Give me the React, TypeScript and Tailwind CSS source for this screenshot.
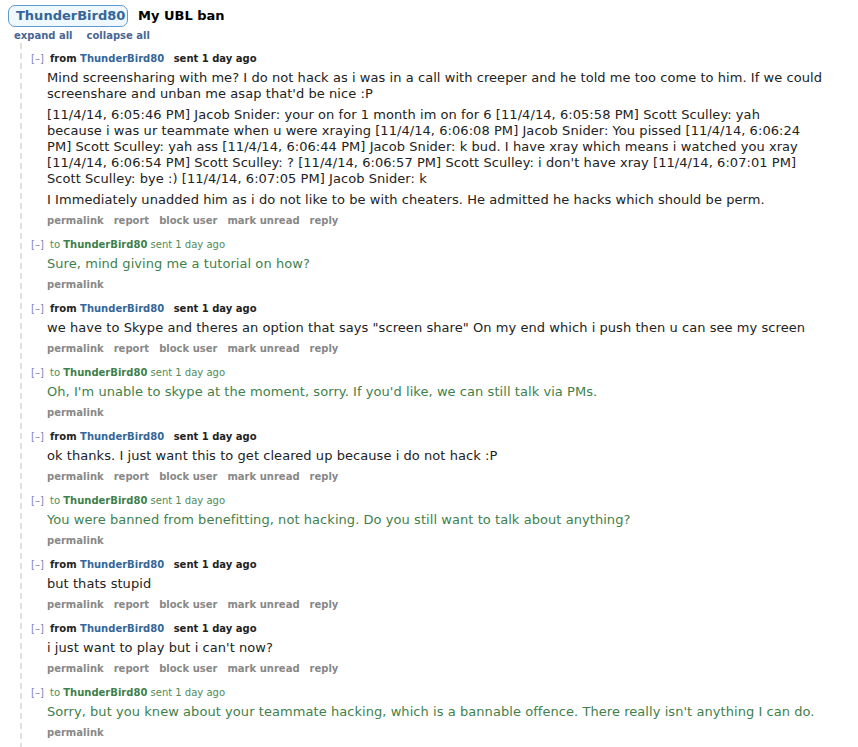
import React from "react";

type Msg = {
  dir: "from" | "to";
  paras: string[][];
};

// each paragraph is a list of lines; lines after the first start on a new row
const messages: Msg[] = [
  {
    dir: "from",
    paras: [
      [
        "Mind screensharing with me? I do not hack as i was in a call with creeper and he told me too come to him. If we could screenshare and unban me asap that'd be nice :P",
      ],
      [
        "[11/4/14, 6:05:46 PM] Jacob Snider: your on for 1 month im on for 6 [11/4/14, 6:05:58 PM] Scott Sculley: yah",
        "because i was ur teammate when u were xraying [11/4/14, 6:06:08 PM] Jacob Snider: You pissed [11/4/14, 6:06:24",
        "PM] Scott Sculley: yah ass [11/4/14, 6:06:44 PM] Jacob Snider: k bud. I have xray which means i watched you xray",
        "[11/4/14, 6:06:54 PM] Scott Sculley: ? [11/4/14, 6:06:57 PM] Scott Sculley: i don't have xray [11/4/14, 6:07:01 PM]",
        "Scott Sculley: bye :) [11/4/14, 6:07:05 PM] Jacob Snider: k",
      ],
      [
        "I Immediately unadded him as i do not like to be with cheaters. He admitted he hacks which should be perm.",
      ],
    ],
  },
  { dir: "to", paras: [["Sure, mind giving me a tutorial on how?"]] },
  {
    dir: "from",
    paras: [
      [
        'we have to Skype and theres an option that says "screen share" On my end which i push then u can see my screen',
      ],
    ],
  },
  {
    dir: "to",
    paras: [
      [
        "Oh, I'm unable to skype at the moment, sorry. If you'd like, we can still talk via PMs.",
      ],
    ],
  },
  {
    dir: "from",
    paras: [
      ["ok thanks. I just want this to get cleared up because i do not hack :P"],
    ],
  },
  {
    dir: "to",
    paras: [
      [
        "You were banned from benefitting, not hacking. Do you still want to talk about anything?",
      ],
    ],
  },
  { dir: "from", paras: [["but thats stupid"]] },
  { dir: "from", paras: [["i just want to play but i can't now?"]] },
  {
    dir: "to",
    paras: [
      [
        "Sorry, but you knew about your teammate hacking, which is a bannable offence. There really isn't anything I can do.",
      ],
    ],
  },
];

function Message({ msg }: { msg: Msg }) {
  const sent = msg.dir === "to";
  const actions = sent
    ? ["permalink"]
    : ["permalink", "report", "block user", "mark unread", "reply"];

  return (
    <div className="pb-[9px]">
      <div className="flex items-center pt-[1px] text-[10px] leading-[14px]">
        <span className="w-[19px] text-[#8088b0]">[–]</span>
        {sent ? (
          <span className="text-[#4f8a5a]">
            to{" "}
            <span className="font-bold text-[#3f7f4c]">ThunderBird80</span>{" "}
            sent 1 day ago
          </span>
        ) : (
          <span className="font-bold text-[#222]">
            from{" "}
            <span className="mr-[6px] text-[#336699]">ThunderBird80</span>{" "}
            sent 1 day ago
          </span>
        )}
      </div>
      <div
        className={`flex flex-col gap-[5px] pb-[5px] pt-[4px] pl-[16px] text-[13px] leading-[16px] tracking-[0.06px] ${
          sent ? "text-[#3f7f4c]" : "text-[#222]"
        }`}
      >
        {msg.paras.map((lines, i) => (
          <p key={i}>
            {lines.map((l, j) => (
              <React.Fragment key={j}>
                {j > 0 && <br />}
                {l}
              </React.Fragment>
            ))}
          </p>
        ))}
      </div>
      <ul className="flex gap-[10px] pl-[16px] pt-[1px] text-[10px] font-bold leading-[14px] text-[#888]">
        {actions.map((a) => (
          <li key={a}>{a}</li>
        ))}
      </ul>
    </div>
  );
}

export default function App() {
  return (
    <div className="min-h-[747px] bg-white pr-[10px] pt-[5px] font-['DejaVu_Sans',Verdana,sans-serif] text-[#222]">
      <div className="flex items-center gap-[10px] pl-[8px]">
        <span className="w-[120px] rounded-[7px] border border-[#5f99cf] bg-[#eff7ff] pl-[7px] text-[13px] font-bold leading-[20px] text-[#336699]">
          ThunderBird80
        </span>
        <span className="text-[13px] font-bold leading-[20px] text-black">
          My UBL ban
        </span>
      </div>
      <div className="flex gap-[14px] pl-[14px] pt-[2px] text-[10px] font-bold leading-[14px] text-[#4a6694]">
        <span>expand all</span>
        <span>collapse all</span>
      </div>
      <div className="ml-[20px] border-l-2 border-dashed border-[#e0e0e0] pl-[9px] pt-[8px]">
        {messages.map((m, i) => (
          <Message key={i} msg={m} />
        ))}
      </div>
    </div>
  );
}
